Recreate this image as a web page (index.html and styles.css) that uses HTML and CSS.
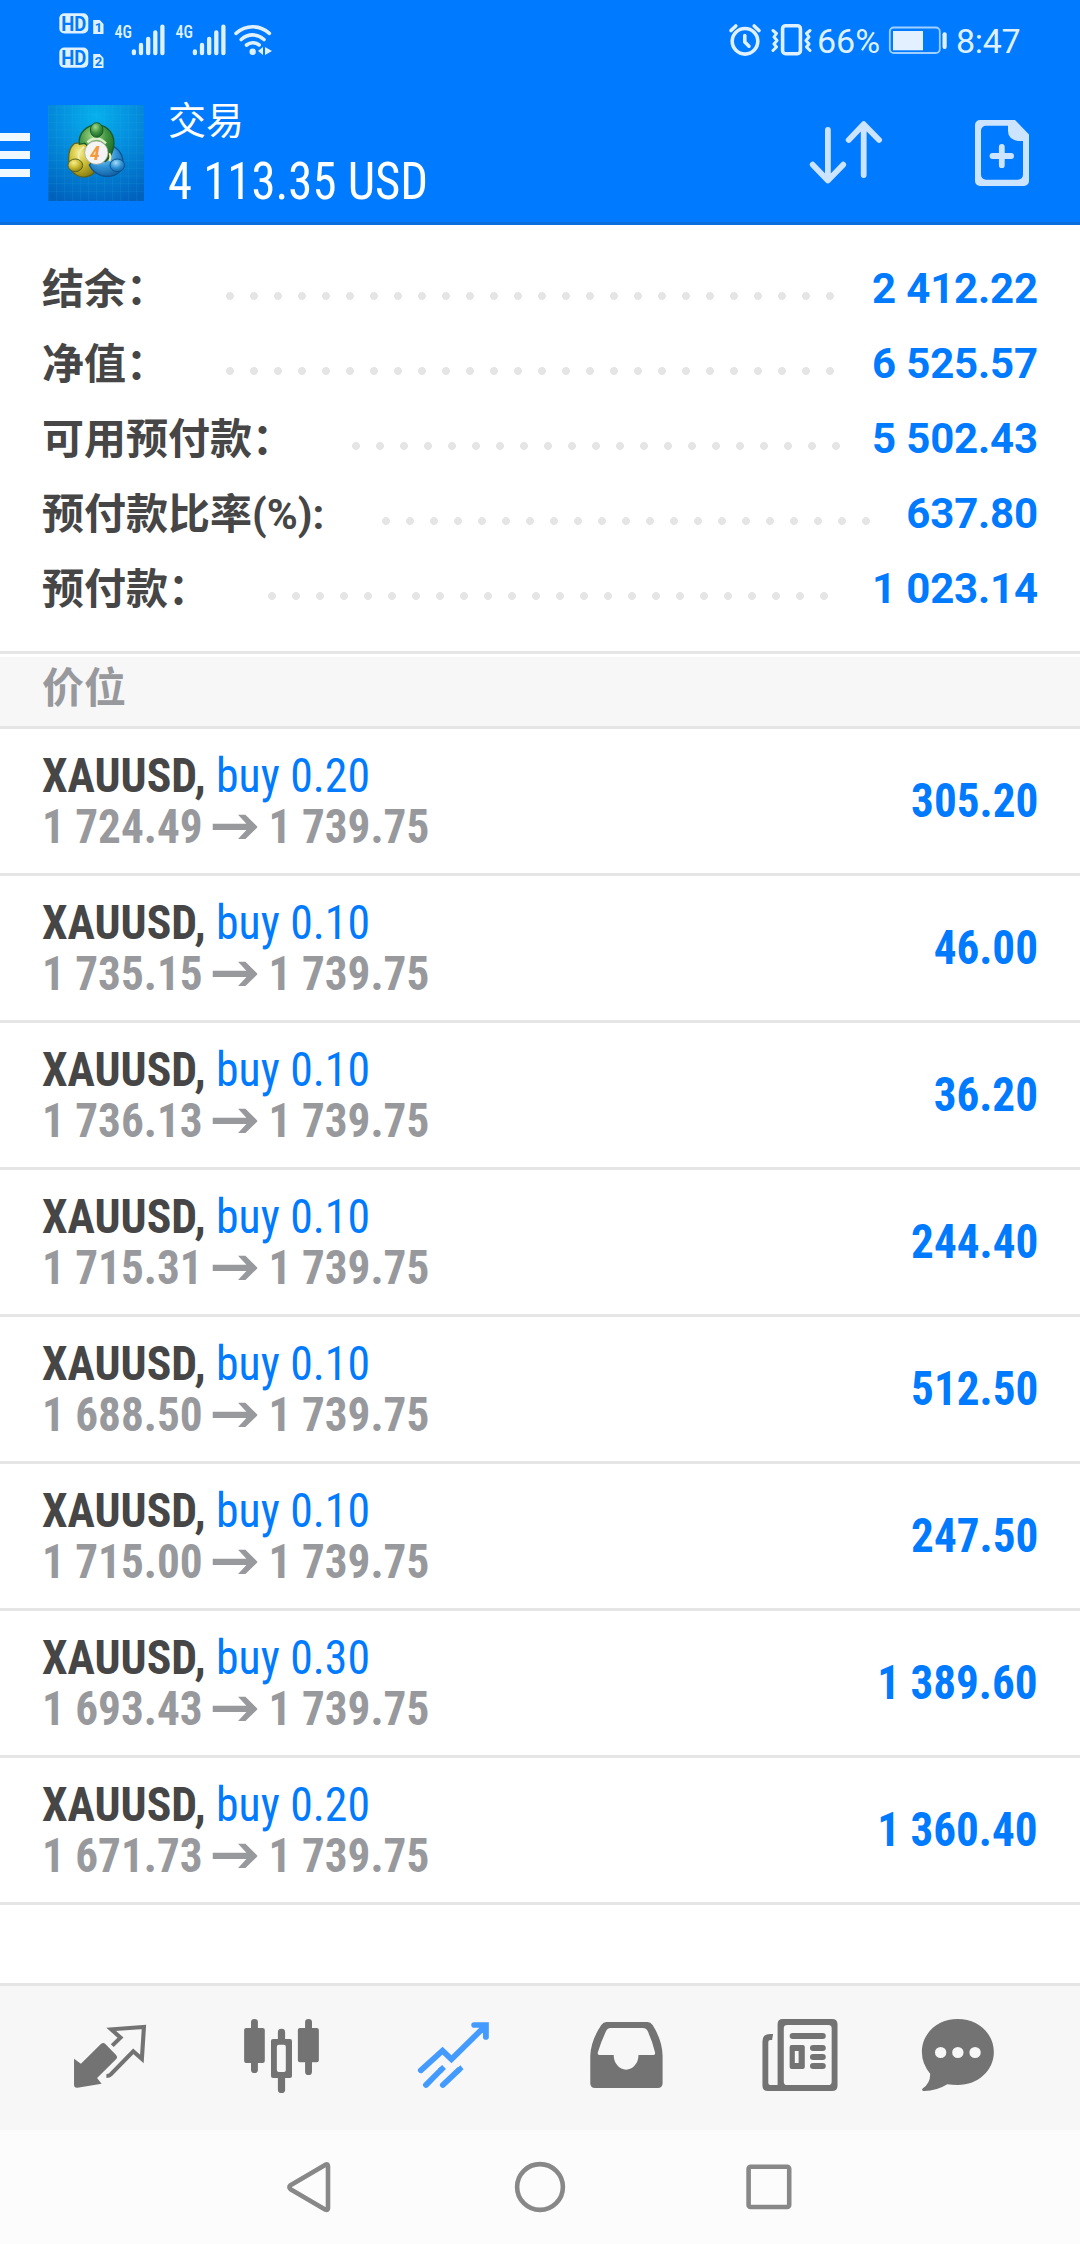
FILE: index.html
```html
<!DOCTYPE html>
<html lang="zh-CN">
<head>
<meta charset="utf-8">
<title>交易</title>
<link rel="stylesheet" href="styles.css">
</head>
<body>
<header class="header">
  <div class="status">
    <svg class="st-hd" width="46" height="80" viewBox="59 0 46 80">
      <rect class="lite" x="59.3" y="13.2" width="29" height="20.3" rx="5"/>
      <rect class="lite" x="59.3" y="47.5" width="29" height="20.3" rx="5"/>
      <path class="lite" d="M93.2 20h6.600l3.700 4v10H93.200zM93.200 54h6.600l3.700 4v10H93.200z"/>
      <text class="hd" x="61.300" y="30.600" textLength="25" lengthAdjust="spacingAndGlyphs">HD</text>
      <text class="hd" x="61.300" y="64.900" textLength="25" lengthAdjust="spacingAndGlyphs">HD</text>
      <text class="sim" x="94.800" y="32.300">1</text>
      <text class="sim" x="94.800" y="66.300">2</text>
    </svg>
    <svg class="st-sig" width="52" height="80" viewBox="114 0 52 80">
      <text class="net" x="114.500" y="38" textLength="17.500" lengthAdjust="spacingAndGlyphs">4G</text>
      <path class="bars" d="M133.900 51.300v1.900M141 45v8.200M148.200 38.800v14.400M155.300 32.300v20.900M162.400 26.600v26.600"/>
    </svg>
    <svg class="st-sig" width="52" height="80" viewBox="114 0 52 80">
      <text class="net" x="114.500" y="38" textLength="17.500" lengthAdjust="spacingAndGlyphs">4G</text>
      <path class="bars" d="M133.900 51.300v1.900M141 45v8.200M148.200 38.800v14.400M155.300 32.300v20.900M162.400 26.600v26.600"/>
    </svg>
    <svg class="st-wifi" width="40" height="80" viewBox="233 0 40 80">
      <path class="arc" d="M236 33.300Q243.500 26.800 252.700 26.800T269.400 33.300M241.200 39.500Q246.500 34.900 252.700 34.900T264 39.500M246.500 45Q249.300 42.700 252.700 42.700T259.200 45"/>
      <circle class="lite" cx="252.700" cy="51.700" r="3.200"/>
      <path class="lite" d="M263 47v8l-5-4zM265 47v8l7-4z"/>
    </svg>
    <div class="grow"></div>
    <svg class="st-alarm" width="34" height="80" viewBox="728 0 34 80">
      <circle class="arc" cx="745" cy="41.300" r="12.800"/>
      <path class="arc" d="M744.800 35.500v6.500l4.200 4.200M731 30.500l4.800-4.500M759 30.500l-4.800-4.500"/>
    </svg>
    <svg class="st-vib" width="42" height="80" viewBox="771 0 42 80">
      <rect class="arc" x="782.600" y="25.700" width="17.800" height="28" rx="3"/>
      <path class="wig" d="M773 30.500l3.500 3-2.500 3.500 3 3.500-3 3.500 2.500 3-3.500 3.500M810 30.500l-3.500 3 2.500 3.500-3 3.500 3 3.500-2.500 3 3.500 3.500"/>
    </svg>
    <span class="pct">66%</span>
    <svg class="st-bat" width="60" height="80" viewBox="888 0 60 80">
      <rect class="cell" x="889.800" y="27.500" width="50" height="25.500" rx="4"/>
      <rect class="fill" x="893" y="31" width="30" height="19.300"/>
      <rect class="lite" x="942.500" y="32.300" width="4.200" height="16.700" rx="2"/>
    </svg>
    <span class="clock">8:47</span>
  </div>
  <div class="appbar">
    <div class="menu"><i></i><i></i><i></i></div>
    <svg class="logo" width="96" height="96" viewBox="0 0 288 288">
      <defs>
        <radialGradient id="bg" cx=".5" cy=".12" r=".95"><stop offset="0" stop-color="#06b0ec"/><stop offset=".4" stop-color="#0590df"/><stop offset="1" stop-color="#0061bd"/></radialGradient>
        <radialGradient id="gr" cx=".4" cy=".3" r=".8"><stop offset="0" stop-color="#a5d98a"/><stop offset=".5" stop-color="#3f9340"/><stop offset="1" stop-color="#125c20"/></radialGradient>
        <radialGradient id="ye" cx=".4" cy=".3" r=".8"><stop offset="0" stop-color="#f7ef8e"/><stop offset=".5" stop-color="#c9b92f"/><stop offset="1" stop-color="#7c7410"/></radialGradient>
        <radialGradient id="bl" cx=".4" cy=".3" r=".8"><stop offset="0" stop-color="#a7dcf8"/><stop offset=".5" stop-color="#3093d6"/><stop offset="1" stop-color="#0a5597"/></radialGradient>
      </defs>
      <rect width="288" height="288" fill="url(#bg)"/>
      <path class="grid" d="M2 0v288M26 0v288M50 0v288M74 0v288M98 0v288M122 0v288M146 0v288M170 0v288M194 0v288M218 0v288M242 0v288M266 0v288M0 6h288M0 29h288M0 52h288M0 75h288M0 98h288M0 121h288M0 144h288M0 167h288M0 190h288M0 213h288M0 236h288M0 259h288"/>
      <path d="M80 115C55 135 55 190 85 210C105 222 130 215 142 200L115 112Z" fill="url(#ye)" stroke="#5d6420" stroke-width="4"/>
      <path d="M178 120C205 122 228 145 225 180C220 208 190 220 160 212Q135 203 124 180Z" fill="url(#bl)" stroke="#0b5494" stroke-width="4"/>
      <path d="M94 118C90 85 115 60 146 60C180 60 205 90 196 130Q190 155 172 170L110 115Z" fill="url(#gr)" stroke="#175d2b" stroke-width="4"/>
      <path d="M118 112Q146 88 174 115" fill="none" stroke="#dbf0cb" stroke-width="7"/>
      <path d="M108 125Q82 145 96 170M184 168Q190 155 184 145" fill="none" stroke="#f3edab" stroke-width="6"/>
      <ellipse cx="146" cy="75" rx="19" ry="22" fill="url(#gr)" stroke="#175d2b" stroke-width="3"/>
      <ellipse cx="82" cy="181" rx="22" ry="19" fill="url(#ye)" stroke="#5d6420" stroke-width="3"/>
      <ellipse cx="208" cy="181" rx="22" ry="19" fill="url(#bl)" stroke="#0b5494" stroke-width="3"/>
      <circle cx="145" cy="143" r="35" fill="#f4f4f4" stroke="#9a9a8c" stroke-width="2"/>
      <text class="four" x="126" y="165">4</text>
    </svg>
    <div class="titles">
      <h1 class="title">交易</h1>
      <div class="profit">4 113.35 USD</div>
    </div>
    <div class="grow"></div>
    <svg class="act-sort" width="84" height="142" viewBox="804 80 84 142">
      <path class="sort" d="M827.900 130v50M812.700 164.700l15.200 15.800 15.300-15.800M863.700 175V125M848.700 140l15-15.800 15.400 15.800"/>
    </svg>
    <svg class="act-new" width="64" height="142" viewBox="970 80 64 142">
      <path class="doc" fill-rule="evenodd" d="M980 120h35l14 14.500V181a5 5 0 0 1-5 5h-44a5 5 0 0 1-5-5v-56a5 5 0 0 1 5-5zM986 125.800a5 5 0 0 0-5 5v44a5 5 0 0 0 5 5h32a5 5 0 0 0 5-5V141h-5q-10-2-10-10v-5.200z"/>
      <path class="sort" d="M992.500 156h18.600M1001.800 146.800v18.400"/>
    </svg>
  </div>
</header>

<section class="summary">
  <div class="srow"><span class="label">结余：</span><i class="dots" style="width:624px"></i><b class="amount">2 412.22</b></div>
  <div class="srow"><span class="label">净值：</span><i class="dots" style="width:624px"></i><b class="amount">6 525.57</b></div>
  <div class="srow"><span class="label">可用预付款：</span><i class="dots" style="width:504px"></i><b class="amount">5 502.43</b></div>
  <div class="srow"><span class="label">预付款比率(%):</span><i class="dots" style="width:504px"></i><b class="amount">637.80</b></div>
  <div class="srow"><span class="label">预付款：</span><i class="dots" style="width:576px"></i><b class="amount">1 023.14</b></div>
</section>

<h2 class="section">价位</h2>

<main class="trades">
  <div class="trade"><div><div class="sym"><b>XAUUSD,</b> buy 0.20</div><div class="prices">1 724.49<svg class="to" width="48" height="26" viewBox="0 0 46 26" preserveAspectRatio="none"><path d="M0 9.800h34.500L26 .8h7.500L46 13 33.500 25H26l8.500-9H0z"/></svg>1 739.75</div></div><b class="gain">305.20</b></div>
  <div class="trade"><div><div class="sym"><b>XAUUSD,</b> buy 0.10</div><div class="prices">1 735.15<svg class="to" width="48" height="26" viewBox="0 0 46 26" preserveAspectRatio="none"><path d="M0 9.800h34.500L26 .8h7.500L46 13 33.500 25H26l8.500-9H0z"/></svg>1 739.75</div></div><b class="gain">46.00</b></div>
  <div class="trade"><div><div class="sym"><b>XAUUSD,</b> buy 0.10</div><div class="prices">1 736.13<svg class="to" width="48" height="26" viewBox="0 0 46 26" preserveAspectRatio="none"><path d="M0 9.800h34.500L26 .8h7.500L46 13 33.500 25H26l8.500-9H0z"/></svg>1 739.75</div></div><b class="gain">36.20</b></div>
  <div class="trade"><div><div class="sym"><b>XAUUSD,</b> buy 0.10</div><div class="prices">1 715.31<svg class="to" width="48" height="26" viewBox="0 0 46 26" preserveAspectRatio="none"><path d="M0 9.800h34.500L26 .8h7.500L46 13 33.500 25H26l8.500-9H0z"/></svg>1 739.75</div></div><b class="gain">244.40</b></div>
  <div class="trade"><div><div class="sym"><b>XAUUSD,</b> buy 0.10</div><div class="prices">1 688.50<svg class="to" width="48" height="26" viewBox="0 0 46 26" preserveAspectRatio="none"><path d="M0 9.800h34.500L26 .8h7.500L46 13 33.500 25H26l8.500-9H0z"/></svg>1 739.75</div></div><b class="gain">512.50</b></div>
  <div class="trade"><div><div class="sym"><b>XAUUSD,</b> buy 0.10</div><div class="prices">1 715.00<svg class="to" width="48" height="26" viewBox="0 0 46 26" preserveAspectRatio="none"><path d="M0 9.800h34.500L26 .8h7.500L46 13 33.500 25H26l8.500-9H0z"/></svg>1 739.75</div></div><b class="gain">247.50</b></div>
  <div class="trade"><div><div class="sym"><b>XAUUSD,</b> buy 0.30</div><div class="prices">1 693.43<svg class="to" width="48" height="26" viewBox="0 0 46 26" preserveAspectRatio="none"><path d="M0 9.800h34.500L26 .8h7.500L46 13 33.500 25H26l8.500-9H0z"/></svg>1 739.75</div></div><b class="gain">1 389.60</b></div>
  <div class="trade"><div><div class="sym"><b>XAUUSD,</b> buy 0.20</div><div class="prices">1 671.73<svg class="to" width="48" height="26" viewBox="0 0 46 26" preserveAspectRatio="none"><path d="M0 9.800h34.500L26 .8h7.500L46 13 33.500 25H26l8.500-9H0z"/></svg>1 739.75</div></div><b class="gain">1 360.40</b></div>
</main>

<nav class="tabs">
  <svg class="tab" viewBox="69.7 78 499.5 432" preserveAspectRatio="none">
    <path d="M215 296l20 15 58-59q7-6 13 0l31 33q6 7 0 13l-55 56 13 17-70 12q-10 1-10-9z"/>
    <path class="ln" d="M326 257l24-24-27-25 95-7-6 96-25-23-66 70q-4 4-12 4"/>
  </svg>
  <svg class="tab" viewBox="569.2 78 499.5 432" preserveAspectRatio="none">
    <path fill-rule="evenodd" d="M729 186a10 9 0 0 1 20 0v18h14q6 0 6 6v93q0 6-6 6h-14v20a10 10 0 0 1-20 0v-20h-14q-6 0-6-6v-93q0-6 6-6h14zM886 186a10 9 0 0 1 20 0v18h14q6 0 6 6v91q0 6-6 6h-14v28a10 10 0 0 1-20 0v-28h-15q-6 0-6-6v-91q0-6 6-6h15zM807 216a10.500 10 0 0 1 21 0v21h14q6 0 6 6v105q0 6-6 6h-14v35a10.500 10 0 0 1-21 0v-35h-14q-6 0-6-6V243q0-6 6-6h14zM810 254q-6 0-6 6v70q0 6 6 6h15q5 0 5-6v-70q0-6-5-6z"/>
  </svg>
  <svg class="tab active" viewBox="1068.6 78 499.5 432" preserveAspectRatio="none">
    <path class="trend" d="M1222 331l63-59 26 26 98-100M1377 195h34v36"/>
    <path class="trend" d="M1237 375l42-44M1286 375l46-45"/>
    <path d="M1272 326l12-11 11 12-12 12zM1324 328l13-12 9 12-13 12z"/>
  </svg>
  <svg class="tab" viewBox="0 78 499.5 432" preserveAspectRatio="none">
    <path fill-rule="evenodd" d="M193 186h119q9 0 15 9 28 46 29 92v83q0 14-14 14H160q-14 0-14-14v-83q2-46 32-92 6-9 15-9zM205 204q-9 0-13 9-14 30-24 64-2 8 8 8h38a36 44 0 0 0 72 0h40q10 0 8-8-8-34-21-63-5-10-14-10z"/>
  </svg>
  <svg class="tab" viewBox="499.5 78 499.5 432" preserveAspectRatio="none">
    <path fill-rule="evenodd" d="M706 177h142q16 0 16 16v184q0 16-16 16H662q-16 0-16-16V244q0-22 22-22h9l-3 18h-5q-6 0-6 7v122q0 6 6 6h21V193q0-16 15-16zM718 195q-10 0-10 10v160q0 10 10 10h119q10 0 10-10V205q0-10-10-10zM734 219h87a9 9 0 0 1 0 18h-87a9 9 0 0 1 0-18zM731 255h32q6 0 6 6v60q0 6-6 6h-32q-6 0-6-6v-60q0-6 6-6zM740 273v36h11v-36zM793 255h28a9 9 0 0 1 0 18h-28a9 9 0 0 1 0-18zM793 282h28a9 9 0 0 1 0 18h-28a9 9 0 0 1 0-18zM793 309h28a9 9 0 0 1 0 18h-28a9 9 0 0 1 0-18z"/>
  </svg>
  <svg class="tab" viewBox="999 78 499.5 432" preserveAspectRatio="none">
    <path fill-rule="evenodd" d="M1213 177c60 0 105 44 105 99s-45 99-105 99q-16 0-30-2-33 21-70 20-6-3-1-8 22-16 21-44-24-30-24-65c0-55 44-99 104-99zM1147 277.500a16.500 16.500 0 0 0 33 0a16.500 16.500 0 0 0-33 0zM1197 277.500a16.500 16.500 0 0 0 33 0a16.500 16.500 0 0 0-33 0zM1247 277.500a16.500 16.500 0 0 0 33 0a16.500 16.500 0 0 0-33 0z"/>
  </svg>
</nav>
<footer class="sysnav">
  <svg width="60" height="60" viewBox="280 2157 60 60"><path d="M325.500 2164.700q2.500-1 2.500 1.500v42q0 2.500-2.500 1.500l-35-20.500q-2-2 0-4z"/></svg>
  <svg width="60" height="60" viewBox="510 2157 60 60"><circle cx="540" cy="2187" r="22.900"/></svg>
  <svg width="60" height="60" viewBox="740 2157 60 60"><rect x="748.600" y="2166.700" width="40.600" height="40.300" rx="2"/></svg>
</footer>
</body>
</html>
```
FILE: styles.css
```css
* { box-sizing: border-box; margin: 0; padding: 0; }
body {
  width: 1080px;
  height: 2244px;
  display: flex;
  flex-direction: column;
  background: #fff;
  color: #464646;
  font-family: Roboto, "Noto Sans CJK SC", sans-serif;
  overflow: hidden;
}
svg { display: block; flex: none; }
.grow { flex: 1; }

/* header */
.header { height: 225px; background: #007aff; border-bottom: 3px solid #0a6edb; color: #fff; }
.status { height: 80px; display: flex; padding: 0 59px; color: #dff1ff; font-size: 34px; line-height: 83px; }
.lite { fill: #dff1ff; }
.arc { fill: none; stroke: #dff1ff; stroke-width: 3.6; stroke-linecap: round; stroke-linejoin: round; }
.wig { fill: none; stroke: #dff1ff; stroke-width: 3; stroke-linecap: round; stroke-linejoin: round; }
.hd { fill: #007aff; font: 700 20px Roboto, sans-serif; }
.sim { fill: #007aff; font: 700 13px Roboto, sans-serif; }
.net { fill: #dff1ff; font: 500 18px "Roboto Condensed", Roboto, sans-serif; }
.bars { fill: none; stroke: #dff1ff; stroke-width: 4.3; stroke-linecap: round; }
.st-sig { margin-left: 9px; }
.st-wifi { margin-left: 6px; }
.st-vib { margin-left: 9px; }
.pct { width: 71px; margin-left: 4px; white-space: nowrap; }
.clock { width: 65px; margin-left: 8px; white-space: nowrap; letter-spacing: -.3px; }
.cell { fill: none; stroke: #9fd0ff; stroke-width: 1.8; }
.fill { fill: #e3f0ff; }

.appbar { height: 142px; display: flex; }
.menu { width: 30px; display: flex; flex-direction: column; gap: 10px; padding-top: 53px; }
.menu i { height: 8px; background: #f0f9ff; }
.logo { margin: 25px 24px 0 18px; }
.grid { fill: none; stroke: #3db4f0; stroke-opacity: .28; stroke-width: 1.5; }
.four { fill: #f39a3c; font: italic 700 60px "Roboto Condensed", Roboto, sans-serif; }
.titles { padding-top: 16px; white-space: nowrap; }
.title { font-size: 38px; line-height: 50px; font-weight: 400; }
.profit {
  margin-top: 7px;
  font: 400 51px/58px "Roboto Condensed", Roboto, sans-serif;
  transform: scaleX(.956);
  transform-origin: left;
}
.sort { fill: none; stroke: #cce4ff; stroke-width: 5.8; stroke-linecap: round; stroke-linejoin: round; }
.doc { fill: #cce4ff; }
.act-sort { margin-right: 82px; }
.act-new { margin-right: 46px; }

/* account summary */
.summary { padding: 26px 42px 25px; border-bottom: 3px solid #e5e5e5; }
.srow { height: 75px; display: flex; font-size: 42px; line-height: 75px; white-space: nowrap; }
.label { padding-top: 1px; font-weight: 700; }
.dots {
  height: 8px;
  margin: 41px 0 0 50px;
  flex: none;
  background: radial-gradient(circle at 12px 4px, #e5e5e5 3.6px, transparent 4.3px) 0 0 / 24px 8px repeat-x;
}
.amount { margin-left: auto; color: #007aff; font-weight: 700; letter-spacing: -.15px; }

.section {
  height: 72px;
  margin-top: 3px;
  padding: 0 42px;
  flex: none;
  background: #f7f7f7;
  border-bottom: 3px solid #e5e5e5;
  color: #98999d;
  font-size: 42px;
  font-weight: 700;
  line-height: 63px;
}

/* open positions */
.trades { flex: 1; }
.trade {
  height: 147px;
  padding: 0 42px;
  display: flex;
  justify-content: space-between;
  align-items: center;
  border-bottom: 3px solid #e5e5e5;
  font: 400 48px/51px "Roboto Condensed", Roboto, sans-serif;
  white-space: nowrap;
}
.sym { color: #007aff; transform: scaleX(.952); transform-origin: left; }
.sym b { color: #464646; }
.prices {
  display: flex;
  align-items: center;
  color: #98999d;
  font-weight: 700;
  transform: scaleX(.942);
  transform-origin: left;
}
.to { margin: 0 11.5px 0 10.5px; fill: #98999d; }
.gain { padding-bottom: 2px; color: #007aff; transform: scaleX(.94); transform-origin: right; }

/* bottom bars */
.tabs { height: 147px; flex: none; display: flex; padding: 0 24px; background: #f7f7f7; border-top: 3px solid #e5e5e5; }
.tab { width: 172px; height: 144px; fill: #737373; }
.ln { fill: none; stroke: #737373; stroke-width: 12; }
.active { fill: #439bff; }
.trend { fill: none; stroke: #439bff; stroke-width: 17; stroke-linecap: round; }
.sysnav { height: 114px; flex: none; display: flex; justify-content: center; align-items: center; gap: 170px; background: #fcfcfc; }
.sysnav svg { fill: none; stroke: #888; stroke-width: 4.6; stroke-linejoin: round; }
```
